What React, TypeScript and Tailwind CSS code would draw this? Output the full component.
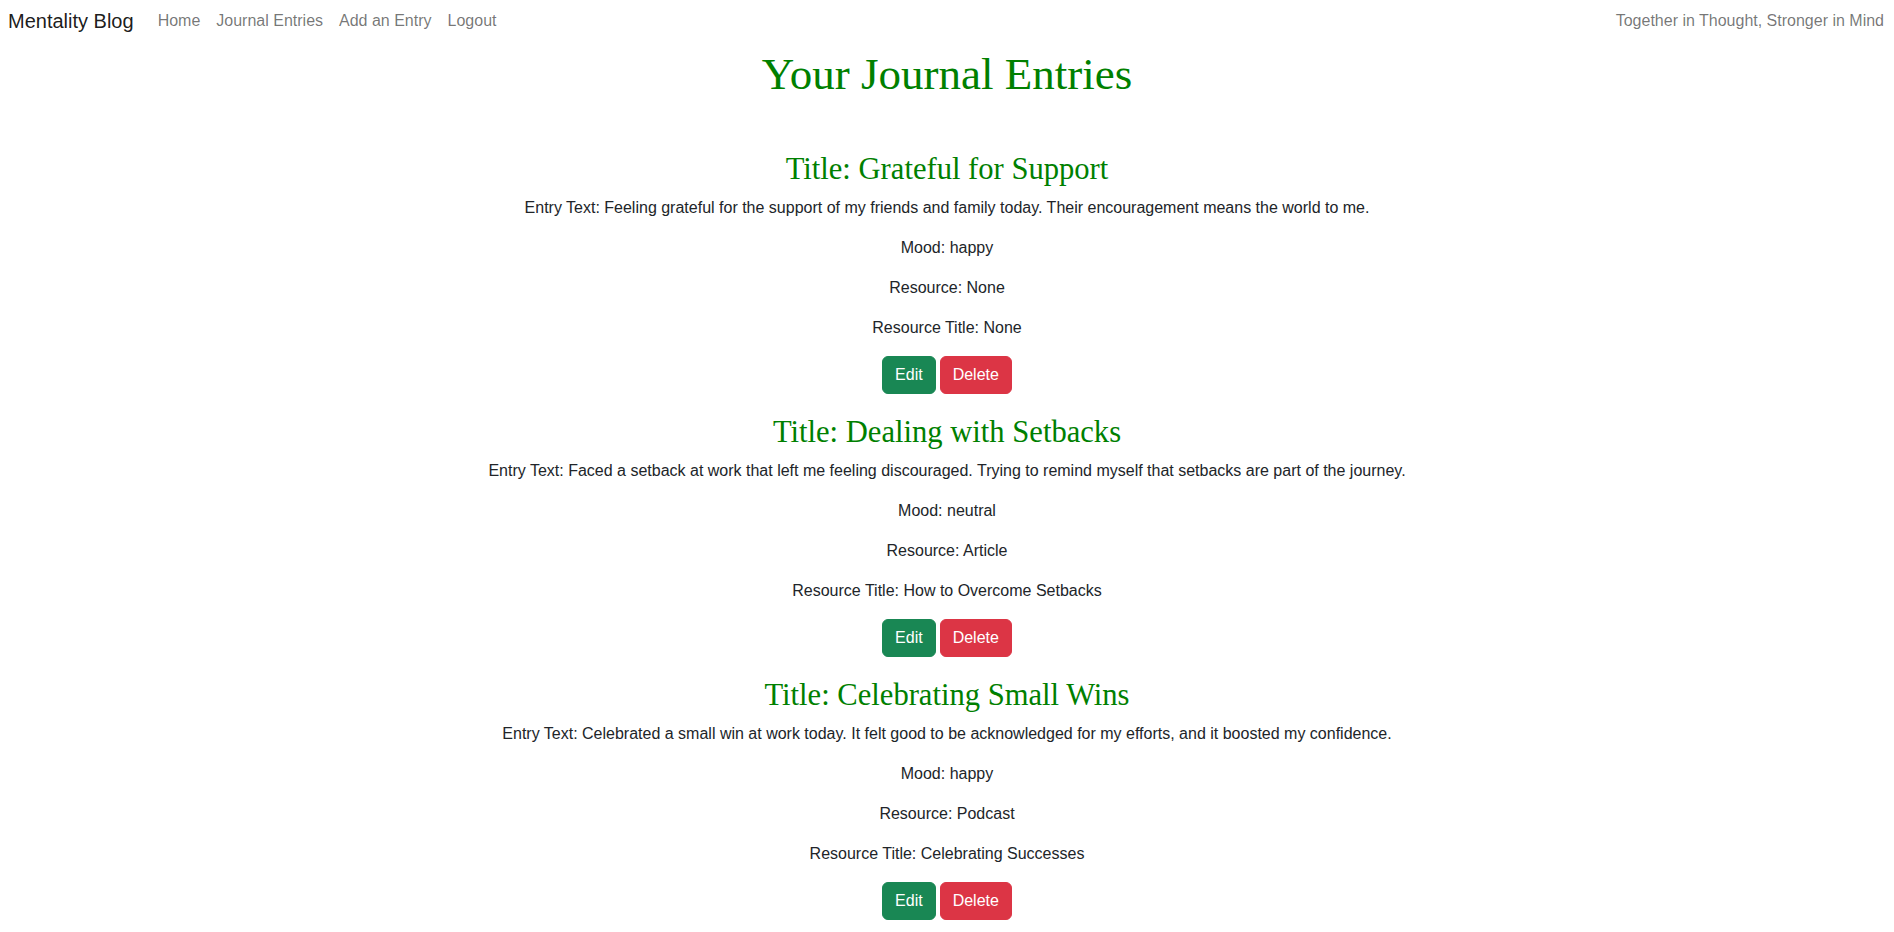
import React from "react";

type Entry = {
  title: string;
  text: string;
  mood: string;
  resource: string;
  resourceTitle: string;
};

const entries: Entry[] = [
  {
    title: "Grateful for Support",
    text: "Feeling grateful for the support of my friends and family today. Their encouragement means the world to me.",
    mood: "happy",
    resource: "None",
    resourceTitle: "None",
  },
  {
    title: "Dealing with Setbacks",
    text: "Faced a setback at work that left me feeling discouraged. Trying to remind myself that setbacks are part of the journey.",
    mood: "neutral",
    resource: "Article",
    resourceTitle: "How to Overcome Setbacks",
  },
  {
    title: "Celebrating Small Wins",
    text: "Celebrated a small win at work today. It felt good to be acknowledged for my efforts, and it boosted my confidence.",
    mood: "happy",
    resource: "Podcast",
    resourceTitle: "Celebrating Successes",
  },
];

export default function App() {
  return (
    <div className="min-h-screen bg-white text-[#212529] font-['Liberation_Sans',Arial,sans-serif] text-[16px] leading-[24px]">
      <nav className="flex h-[41px] items-center justify-between pl-2 pr-[10px] pt-[1px]">
        <div className="flex items-center">
          <a className="mr-4 py-[5px] text-[20px] leading-[30px] text-[rgba(0,0,0,0.9)]">Mentality Blog</a>
          <ul className="flex items-center">
            {["Home", "Journal Entries", "Add an Entry", "Logout"].map((l) => (
              <li key={l}>
                <a className="px-2 py-2 text-[rgba(0,0,0,0.55)]">{l}</a>
              </li>
            ))}
          </ul>
        </div>
        <span className="text-[rgba(0,0,0,0.55)]">Together in Thought, Stronger in Mind</span>
      </nav>

      <main className="text-center">
        <h1 className="mt-[7px] mb-[50px] font-['Liberation_Serif',Georgia,serif] text-[45px] leading-[53px] text-[#008000]">
          Your Journal Entries
        </h1>
        {entries.map((e) => (
          <div key={e.title} className="mb-[20px]">
            <h2 className="mb-2 font-['Liberation_Serif',Georgia,serif] text-[30.6px] leading-[37px] text-[#008000]">
              Title: {e.title}
            </h2>
            <p className="mb-4">Entry Text: {e.text}</p>
            <p className="mb-4">Mood: {e.mood}</p>
            <p className="mb-4">Resource: {e.resource}</p>
            <p className="mb-4">Resource Title: {e.resourceTitle}</p>
            <div className="flex justify-center gap-[4px]">
              <button className="h-[38px] rounded-[6px] border border-[#198754] bg-[#198754] px-3 text-white">
                Edit
              </button>
              <button className="h-[38px] rounded-[6px] border border-[#dc3545] bg-[#dc3545] px-3 text-white">
                Delete
              </button>
            </div>
          </div>
        ))}
      </main>
    </div>
  );
}
